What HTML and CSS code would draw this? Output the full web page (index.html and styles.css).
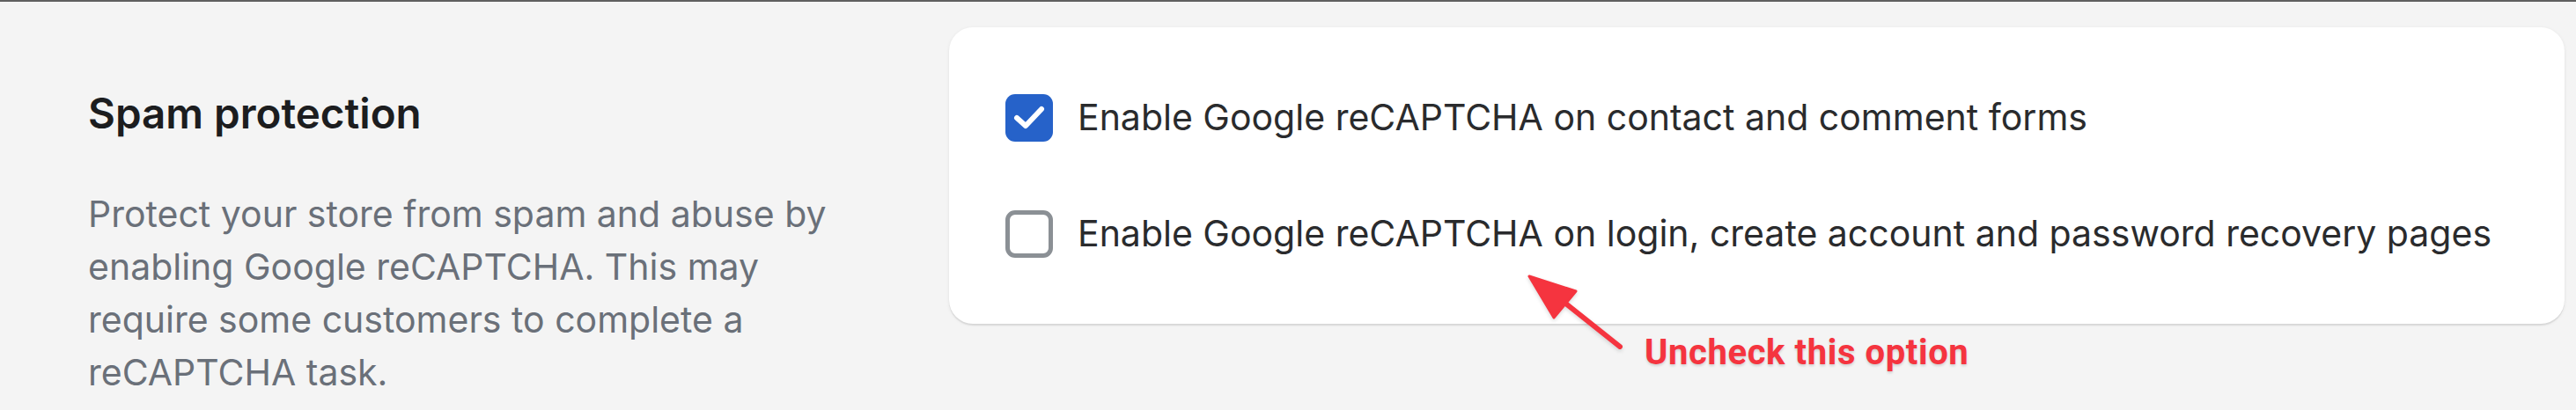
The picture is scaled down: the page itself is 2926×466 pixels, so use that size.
FILE: index.html
```html
<!DOCTYPE html>
<html lang="en">
<head>
<meta charset="utf-8">
<title>Spam protection</title>
<link rel="stylesheet" href="styles.css">
</head>
<body>
<div class="page">
  <section class="layout">
    <div class="annotated">
      <h2 class="title">Spam protection</h2>
      <p class="desc">Protect your store from spam and abuse by enabling Google reCAPTCHA. This may require some customers to complete a reCAPTCHA task.</p>
    </div>
    <div class="card">
      <label class="row">
        <span class="box box-checked">
          <svg viewBox="0 0 54 54" width="54" height="54"><polyline points="13,27 23,36 41,17" fill="none" stroke="#fff" stroke-width="6" stroke-linecap="round" stroke-linejoin="round"/></svg>
        </span>
        <span class="label">Enable Google reCAPTCHA on contact and comment forms</span>
      </label>
      <label class="row">
        <span class="box box-empty"></span>
        <span class="label">Enable Google reCAPTCHA on login, create account and password recovery pages</span>
      </label>
    </div>
  </section>
  <svg class="arrow" width="2926" height="466" viewBox="0 0 2926 466">
    <line x1="1776" y1="343" x2="1840" y2="394" stroke="#f5343f" stroke-width="6" stroke-linecap="round"/>
    <polygon points="1737,314 1790,331 1765,361" fill="#f5343f" stroke="#f5343f" stroke-width="3" stroke-linejoin="round"/>
  </svg>
  <div class="note">Uncheck this option</div>
</div>
</body>
</html>
```
FILE: styles.css
```css
html, body {
  margin: 0;
  padding: 0;
}
body {
  width: 2926px;
  height: 466px;
  overflow: hidden;
  background: #f4f4f4;
  font-family: Inter, "Noto Sans", sans-serif;
}
.page {
  position: relative;
  height: 466px;
  box-sizing: border-box;
  border-top: 2px solid #5f5f5f;
}
.layout {
  display: grid;
  grid-template-columns: 880px 1835px;
  column-gap: 98px;
  padding: 29px 0 0 100px;
}
.annotated {
  padding-top: 70px;
}
.title {
  margin: 0;
  font-size: 47.5px;
  line-height: 56px;
  font-weight: 600;
  color: #1c1d1f;
}
.desc {
  margin: 56px 0 0;
  font-size: 41px;
  line-height: 60px;
  font-weight: 400;
  color: #6a7079;
}
.card {
  background: #fff;
  border-radius: 27px;
  height: 337px;
  box-sizing: border-box;
  padding: 75px 64px;
  display: flex;
  flex-direction: column;
  gap: 77px;
  box-shadow: 0 2px 1px rgba(0, 0, 0, 0.08), 0 1px 4px rgba(0, 0, 0, 0.07);
}
.row {
  display: flex;
  align-items: center;
  gap: 28px;
  height: 55px;
}
.box {
  flex: none;
  width: 54px;
  height: 54px;
  border-radius: 11px;
  box-sizing: border-box;
  display: flex;
  align-items: center;
  justify-content: center;
}
.box-checked {
  background: #2662c9;
}
.box-empty {
  background: #fff;
  border: 5px solid #8b9095;
}
.label {
  font-size: 41px;
  line-height: 55px;
  color: #2a2b2d;
  white-space: nowrap;
}
.arrow {
  position: absolute;
  left: 0;
  top: -2px;
  pointer-events: none;
  filter: drop-shadow(0 2px 2px rgba(0, 0, 0, 0.15));
}
.note {
  position: absolute;
  left: 1868px;
  top: 379px;
  font-family: Roboto, "Liberation Sans", sans-serif;
  font-weight: 700;
  font-size: 40px;
  line-height: 40px;
  letter-spacing: 0.6px;
  color: #f5343f;
  white-space: nowrap;
  text-shadow: 0 2px 3px rgba(0, 0, 0, 0.15);
}
```
